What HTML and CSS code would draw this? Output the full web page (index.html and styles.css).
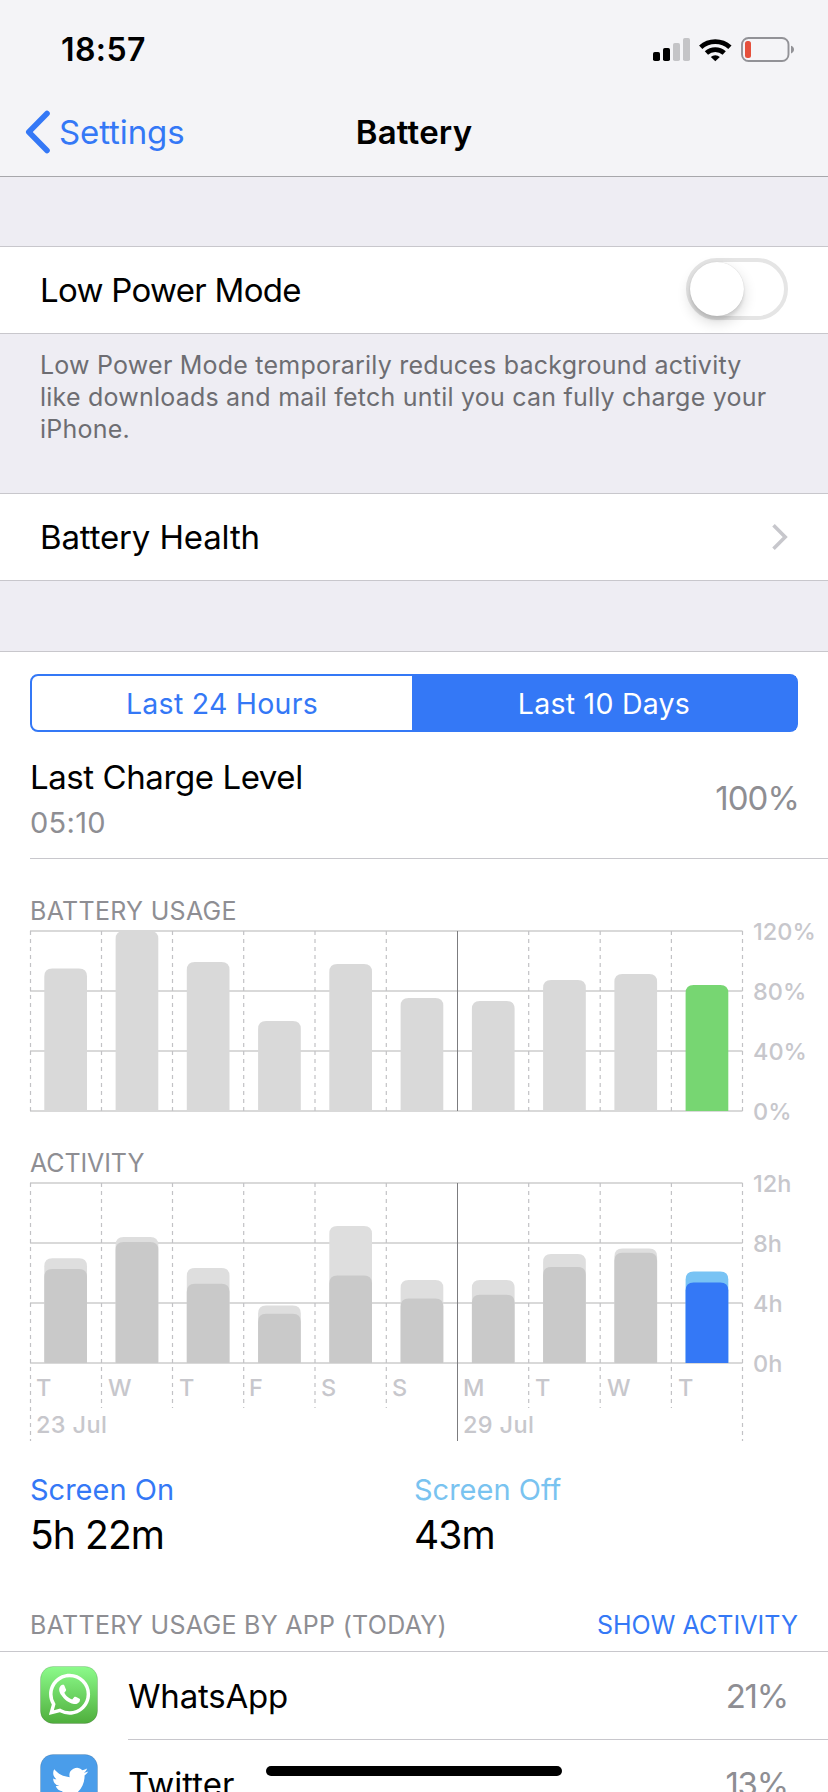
FILE: index.html
```
<!DOCTYPE html>
<html lang="en">
<head>
<meta charset="utf-8">
<title>Battery</title>
<link rel="stylesheet" href="styles.css">
</head>
<body>
<div class="screen">
  <header class="top">
    <div class="status">
      <span class="clock">18:57</span>
      <svg class="status-icons" width="144" height="28" viewBox="652 35 144 28">
        <rect x="653" y="52" width="7" height="9" rx="1.8"/>
        <rect x="663" y="48" width="7" height="13" rx="1.8"/>
        <g fill="#c4c4c7"><rect x="673" y="43" width="7" height="18" rx="1.8"/><rect x="683" y="38" width="7" height="23" rx="1.8"/></g>
        <g fill="none" stroke="#000" stroke-width="4.8">
          <path d="M700.7 47.3a21.6 21.6 0 0 1 29.2 0"/>
          <path d="M706.4 53.1a13.2 13.2 0 0 1 17.8 0"/>
        </g>
        <path d="M710.8 56.9a6.6 6.6 0 0 1 9 0L715.3 61.200z"/>
        <rect x="742" y="38" width="46.500" height="23" rx="6.500" fill="none" stroke="#929297" stroke-width="1.900"/>
        <rect x="745" y="41" width="6" height="17" rx="2.500" fill="#e5503c"/>
        <path d="M791 45.800c4 1.200 4 6.400 0 7.600z" fill="#929297"/>
      </svg>
    </div>
    <nav class="nav">
      <div class="back">
        <svg width="26" height="44" viewBox="0 0 26 44"><path d="M23 3.500 4.800 22l18.200 18.500" fill="none" stroke="#3478f6" stroke-width="5.600" stroke-linecap="round" stroke-linejoin="round"/></svg>
        <span class="back-label">Settings</span>
      </div>
      <h1 class="title">Battery</h1>
    </nav>
  </header>

  <section class="group low-power">
    <span class="lpm">Low Power Mode</span>
    <span class="toggle"><span class="knob"></span></span>
  </section>
  <p class="note">Low Power Mode temporarily reduces background activity<br>like downloads and mail fetch until you can fully charge your<br>iPhone.</p>

  <section class="group health">
    <span class="bh">Battery Health</span>
    <svg width="18" height="30" viewBox="0 0 18 30"><path d="M3.500 3.300 15.200 15 3.500 26.700" fill="none" stroke="#c7c7cc" stroke-width="3.600"/></svg>
  </section>

  <main class="panel">
    <div class="segments">
      <span class="seg seg-day">Last 24 Hours</span>
      <span class="seg seg-on">Last 10 Days</span>
    </div>
    <div class="charge">
      <div>
        <div class="charge-title">Last Charge Level</div>
        <div class="charge-time">05:10</div>
      </div>
      <span class="charge-pct">100%</span>
    </div>

    <section class="charts">
      <h2 class="chart-title usage-title">BATTERY USAGE</h2>
      <svg class="chart" width="798" height="222" viewBox="30 926 798 222">
        <path class="rule" d="M30 931H742.500M30 991H742.500M30 1051H742.500M30 1111H742.500"/>
        <path class="dash" d="M30.500 931V1111M101.500 931V1111M172.500 931V1111M243.700 931V1111M315 931V1111M386.300 931V1111M528.700 931V1111M600.200 931V1111M671.400 931V1111M742.500 931V1111"/>
        <g fill="#d9d9d9">
          <path d="M44.300 1111v-134.500q0-8 8-8h26.700q8 0 8 8v134.500z"/>
          <path d="M115.600 1111v-172q0-8 8-8h26.700q8 0 8 8v172z"/>
          <path d="M186.800 1111v-141q0-8 8-8h26.700q8 0 8 8v141z"/>
          <path d="M258.100 1111v-82q0-8 8-8h26.700q8 0 8 8v82z"/>
          <path d="M329.300 1111v-139q0-8 8-8h26.700q8 0 8 8v139z"/>
          <path d="M400.600 1111v-105q0-8 8-8h26.700q8 0 8 8v105z"/>
          <path d="M471.900 1111v-102q0-8 8-8h26.700q8 0 8 8v102z"/>
          <path d="M543.100 1111v-123q0-8 8-8h26.700q8 0 8 8v123z"/>
          <path d="M614.400 1111v-129q0-8 8-8h26.700q8 0 8 8v129z"/>
        </g>
        <path fill="#77d672" d="M685.600 1111v-118q0-8 8-8h26.700q8 0 8 8v118z"/>
        <path class="week" d="M457.500 931V1111"/>
        <g class="axis">
          <text x="753" y="940">120%</text><text x="753" y="1000">80%</text><text x="753" y="1060">40%</text><text x="753" y="1120">0%</text>
        </g>
      </svg>
      <h2 class="chart-title activity-title">ACTIVITY</h2>
      <svg class="chart" width="798" height="290" viewBox="30 1178 798 290">
        <path class="rule" d="M30 1183H742.500M30 1243H742.500M30 1303H742.500M30 1363H742.500"/>
        <path class="dash" d="M30.500 1183V1441M101.500 1183V1408M172.500 1183V1408M243.700 1183V1408M315 1183V1408M386.300 1183V1408M528.700 1183V1408M600.200 1183V1408M671.400 1183V1408M742.500 1183V1441"/>
        <g fill="#dedede">
          <path d="M44.300 1363v-96.700q0-8 8-8h26.700q8 0 8 8v96.700z"/>
          <path d="M115.600 1363v-118q0-8 8-8h26.700q8 0 8 8v118z"/>
          <path d="M186.800 1363v-87q0-8 8-8h26.700q8 0 8 8v87z"/>
          <path d="M258.100 1363v-49.500q0-8 8-8h26.700q8 0 8 8v49.500z"/>
          <path d="M329.300 1363v-129q0-8 8-8h26.700q8 0 8 8v129z"/>
          <path d="M400.600 1363v-75q0-8 8-8h26.700q8 0 8 8v75z"/>
          <path d="M471.900 1363v-75q0-8 8-8h26.700q8 0 8 8v75z"/>
          <path d="M543.100 1363v-101q0-8 8-8h26.700q8 0 8 8v101z"/>
          <path d="M614.400 1363v-106.500q0-8 8-8h26.700q8 0 8 8v106.500z"/>
        </g>
        <g fill="#c9c9c9">
          <path d="M44.300 1363v-86q0-8 8-8h26.700q8 0 8 8v86z"/>
          <path d="M115.600 1363v-113q0-8 8-8h26.700q8 0 8 8v113z"/>
          <path d="M186.800 1363v-71.300q0-8 8-8h26.700q8 0 8 8v71.300z"/>
          <path d="M258.100 1363v-41.300q0-8 8-8h26.700q8 0 8 8v41.300z"/>
          <path d="M329.300 1363v-79.500q0-8 8-8h26.700q8 0 8 8v79.500z"/>
          <path d="M400.600 1363v-56.500q0-8 8-8h26.700q8 0 8 8v56.500z"/>
          <path d="M471.900 1363v-60.300q0-8 8-8h26.700q8 0 8 8v60.300z"/>
          <path d="M543.100 1363v-88q0-8 8-8h26.700q8 0 8 8v88z"/>
          <path d="M614.400 1363v-102.300q0-8 8-8h26.700q8 0 8 8v102.300z"/>
        </g>
        <path fill="#79c3f4" d="M685.600 1363v-83.400q0-8 8-8h26.700q8 0 8 8v83.400z"/>
        <path fill="#3478f6" d="M685.600 1363v-72.500q0-8 8-8h26.700q8 0 8 8v72.500z"/>
        <path class="week" d="M457.500 1183V1441"/>
        <g class="axis">
          <text x="753" y="1192">12h</text><text x="753" y="1252">8h</text><text x="753" y="1312">4h</text><text x="753" y="1372">0h</text>
          <text x="36" y="1396">T</text><text x="108" y="1396">W</text><text x="179" y="1396">T</text><text x="249" y="1396">F</text><text x="321" y="1396">S</text><text x="392" y="1396">S</text><text x="463" y="1396">M</text><text x="535" y="1396">T</text><text x="607" y="1396">W</text><text x="678" y="1396">T</text>
          <text class="date" x="36" y="1433">23 Jul</text><text class="date" x="463" y="1433">29 Jul</text>
        </g>
      </svg>
    </section>

    <section class="totals">
      <div><div class="total-name on">Screen On</div><div class="total-value">5h 22m</div></div>
      <div><div class="total-name off">Screen Off</div><div class="total-value value-off">43m</div></div>
    </section>

    <div class="apps-head">
      <span class="apps-title">BATTERY USAGE BY APP (TODAY)</span>
      <a class="apps-link">SHOW ACTIVITY</a>
    </div>
    <div class="app">
      <svg class="app-icon" width="58" height="58" viewBox="0 0 58 58">
        <defs><linearGradient id="wa" x1="0" y1="0" x2="0" y2="1"><stop offset="0" stop-color="#8cfb8b"/><stop offset="1" stop-color="#4fae3c"/></linearGradient></defs>
        <rect x=".5" y=".5" width="57" height="57" rx="12.500" fill="url(#wa)" stroke="#000" stroke-opacity=".14"/>
        <path transform="translate(8.800 7.700) scale(1.725)" fill="#fff" d="M17.472 14.382c-.297-.149-1.758-.867-2.030-.967-.273-.099-.471-.148-.670.150-.197.297-.767.966-.940 1.164-.173.199-.347.223-.644.075-.297-.150-1.255-.463-2.390-1.475-.883-.788-1.480-1.761-1.653-2.059-.173-.297-.018-.458.130-.606.134-.133.298-.347.446-.520.149-.174.198-.298.298-.497.099-.198.050-.371-.025-.520-.075-.149-.669-1.612-.916-2.207-.242-.579-.487-.500-.669-.510-.173-.008-.371-.010-.570-.010-.198 0-.520.074-.792.372-.272.297-1.040 1.016-1.040 2.479 0 1.462 1.065 2.875 1.213 3.074.149.198 2.096 3.200 5.077 4.487.709.306 1.262.489 1.694.625.712.227 1.360.195 1.871.118.571-.085 1.758-.719 2.006-1.413.248-.694.248-1.289.173-1.413-.074-.124-.272-.198-.570-.347m-5.421 7.403h-.004a9.870 9.870 0 0 1-5.031-1.378l-.361-.214-3.741.982.998-3.648-.235-.374a9.860 9.860 0 0 1-1.510-5.260c.001-5.450 4.436-9.884 9.888-9.884 2.640 0 5.122 1.030 6.988 2.898a9.825 9.825 0 0 1 2.893 6.994c-.003 5.450-4.437 9.884-9.885 9.884m8.413-18.297A11.815 11.815 0 0 0 12.050 0C5.495 0 .160 5.335.157 11.892c0 2.096.547 4.142 1.588 5.945L.057 24l6.305-1.654a11.882 11.882 0 0 0 5.683 1.448h.005c6.554 0 11.890-5.335 11.893-11.893a11.821 11.821 0 0 0-3.480-8.413z"/>
      </svg>
      <div class="app-row"><span class="app-name wa">WhatsApp</span><span class="app-pct">21%</span></div>
    </div>
    <div class="app">
      <svg class="app-icon" width="58" height="58" viewBox="0 0 58 58">
        <rect x=".5" y=".5" width="57" height="57" rx="12.500" fill="#4a9dea" stroke="#000" stroke-opacity=".12"/>
        <path transform="translate(11.700 10.500) scale(1.525)" fill="#fff" d="M23.953 4.570a10 10 0 0 1-2.825.775 4.958 4.958 0 0 0 2.163-2.723c-.951.555-2.005.959-3.127 1.184a4.920 4.920 0 0 0-8.384 4.482C7.690 8.095 4.067 6.130 1.640 3.162a4.822 4.822 0 0 0-.666 2.475c0 1.710.870 3.213 2.188 4.096a4.904 4.904 0 0 1-2.228-.616v.060a4.923 4.923 0 0 0 3.946 4.827 4.996 4.996 0 0 1-2.212.085 4.936 4.936 0 0 0 4.604 3.417 9.867 9.867 0 0 1-6.102 2.105c-.390 0-.779-.023-1.170-.067a13.995 13.995 0 0 0 7.557 2.209c9.053 0 13.998-7.496 13.998-13.985 0-.210 0-.420-.015-.630A9.935 9.935 0 0 0 24 4.590z"/>
      </svg>
      <div class="app-row"><span class="app-name tw">Twitter</span><span class="app-pct">13%</span></div>
    </div>
  </main>
  <div class="home-bar"></div>
</div>
</body>
</html>
```
FILE: styles.css
```
* { box-sizing: border-box; }
body { margin: 0; background: #eeedf3; }
h1, h2, p { margin: 0; font-weight: 400; }
svg { display: block; flex: none; }

.screen {
  position: relative;
  width: 828px;
  height: 1792px;
  overflow: hidden;
  background: #eeedf3;
  color: #000;
  font: 400 33px/40px Inter, "Liberation Sans", sans-serif;
  white-space: nowrap;
}

.top { height: 177px; background: #f4f4f7; border-bottom: 1px solid #a7a7ab; }
.status { display: flex; justify-content: space-between; height: 88px; padding: 35px 32px 0 61px; }
.clock { font-size: 32px; line-height: 30px; font-weight: 600; letter-spacing: .4px; }
.nav { display: grid; grid-template-columns: 1fr auto 1fr; height: 88px; padding: 22px 24px 0; }
.back { display: flex; gap: 9px; color: #3478f6; }
.back-label { line-height: 44px; letter-spacing: -.1px; }
.title { font-size: 33px; font-weight: 600; line-height: 44px; letter-spacing: .2px; }

.group {
  display: flex;
  align-items: center;
  justify-content: space-between;
  height: 88px;
  padding: 0 40px;
  background: #fff;
  border: solid #c8c7cc;
  border-width: 1px 0;
}
.low-power { margin-top: 69px; }
.toggle { width: 102px; height: 62px; border: 4px solid #e5e5e5; border-radius: 31px; margin-top: -2px; }
.knob {
  display: block;
  width: 54px;
  height: 54px;
  border-radius: 50%;
  background: #fff;
  box-shadow: 0 6px 14px rgba(0,0,0,.16), 0 4px 3px rgba(0,0,0,.08), 0 0 1px rgba(0,0,0,.2);
}
.lpm { letter-spacing: -.7px; }
.bh { letter-spacing: -.15px; }
.note { height: 159px; padding: 15px 40px 0; color: #6d6d72; font-size: 25px; line-height: 32px; letter-spacing: .22px; }

.panel { height: 1141px; margin-top: 70px; background: #fff; border-top: 1px solid #c8c7cc; }
.segments {
  display: grid;
  grid-template-columns: 380px 1fr;
  height: 58px;
  margin: 22px 30px 0;
  border: 2px solid #3478f6;
  border-radius: 8px;
  color: #3478f6;
  font-size: 28.500px;
  line-height: 55px;
  letter-spacing: .25px;
  text-align: center;
}
.seg { height: 54px; }
.seg-on { background: #3478f6; color: #fff; }

.charge { display: flex; justify-content: space-between; height: 127px; margin-left: 30px; padding: 25px 29px 0 0; border-bottom: 1px solid #c8c7cc; }
.charge-title { letter-spacing: -.42px; }
.charge-time { margin-top: 6px; font-size: 29px; letter-spacing: .3px; color: #8e8e93; }
.charge-pct { margin-top: 21px; letter-spacing: -.9px; color: #8e8e93; }

.charts { padding: 37px 0 0 30px; }
.chart { overflow: visible; }
.chart-title { font-size: 25px; line-height: 30px; color: #8e8e93; }
.usage-title { letter-spacing: .3px; }
.activity-title { letter-spacing: -.1px; }
.rule { fill: none; stroke: #d9d9d9; stroke-width: 2; }
.dash { fill: none; stroke: #c2c2c5; stroke-width: 1.200; stroke-dasharray: 4 4; }
.week { fill: none; stroke: #7c7c7f; stroke-width: 1; }
.axis { fill: #c7c7cc; font-size: 23.500px; font-weight: 500; }
.date { letter-spacing: .35px; }

.totals { display: grid; grid-template-columns: 384px 1fr; height: 90px; padding: 4px 30px 0; }
.total-name { font-size: 29px; line-height: 36px; }
.total-name.on { color: #3478f6; }
.total-name.off { color: #79c3f0; }
.total-value { margin-top: 4px; font-size: 39px; line-height: 46px; letter-spacing: -.9px; }

.apps-head { display: flex; justify-content: space-between; height: 94px; padding: 52px 30px 0; border-bottom: 1px solid #c8c7cc; font-size: 25px; line-height: 30px; color: #8e8e93; }
.apps-title { letter-spacing: .29px; }
.apps-link { color: #3478f6; letter-spacing: .05px; }
.app { display: flex; height: 88px; padding-left: 40px; gap: 30px; }
.app-icon { margin-top: 14px; }
.app-row { flex: 1; display: flex; justify-content: space-between; padding-right: 40px; line-height: 88px; border-bottom: 1px solid #c8c7cc; }
.wa { letter-spacing: -.2px; }
.app-pct { color: #8e8e93; letter-spacing: -1.200px; }

.home-bar { position: absolute; left: 266px; top: 1766px; width: 296px; height: 10px; border-radius: 5px; background: #000; }
```
